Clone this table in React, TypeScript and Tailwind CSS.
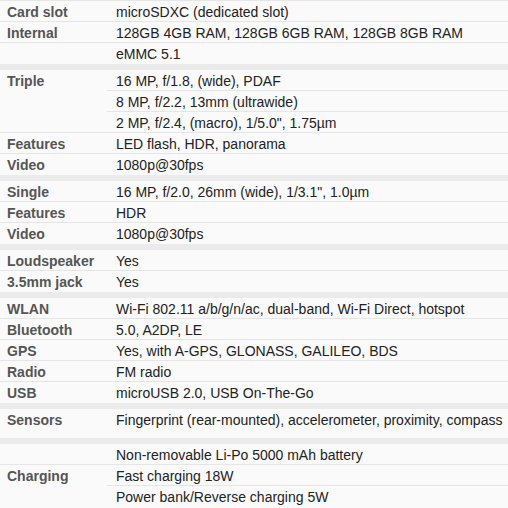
import React from "react";

type Row = { l?: string; v: string; lb?: boolean; tall?: boolean };

const groups: Row[][] = [
  [
    { l: "Card slot", v: "microSDXC (dedicated slot)" },
    { l: "Internal", v: "128GB 4GB RAM, 128GB 6GB RAM, 128GB 8GB RAM" },
    { l: "", v: "eMMC 5.1" },
  ],
  [
    { l: "Triple", v: "16 MP, f/1.8, (wide), PDAF", lb: false },
    { l: "", v: "8 MP, f/2.2, 13mm (ultrawide)", lb: false },
    { l: "", v: "2 MP, f/2.4, (macro), 1/5.0\", 1.75µm" },
    { l: "Features", v: "LED flash, HDR, panorama" },
    { l: "Video", v: "1080p@30fps" },
  ],
  [
    { l: "Single", v: "16 MP, f/2.0, 26mm (wide), 1/3.1\", 1.0µm" },
    { l: "Features", v: "HDR" },
    { l: "Video", v: "1080p@30fps" },
  ],
  [
    { l: "Loudspeaker", v: "Yes" },
    { l: "3.5mm jack", v: "Yes" },
  ],
  [
    { l: "WLAN", v: "Wi-Fi 802.11 a/b/g/n/ac, dual-band, Wi-Fi Direct, hotspot" },
    { l: "Bluetooth", v: "5.0, A2DP, LE" },
    { l: "GPS", v: "Yes, with A-GPS, GLONASS, GALILEO, BDS" },
    { l: "Radio", v: "FM radio" },
    { l: "USB", v: "microUSB 2.0, USB On-The-Go" },
  ],
  [{ l: "Sensors", v: "Fingerprint (rear-mounted), accelerometer, proximity, compass", tall: true }],
  [
    { l: "", v: "Non-removable Li-Po 5000 mAh battery" },
    { l: "Charging", v: "Fast charging 18W", lb: false },
    { l: "", v: "Power bank/Reverse charging 5W" },
  ],
];

export default function App() {
  return (
    <div
      className="w-[508px] h-[508px] bg-[#fafafa] overflow-hidden text-[14px] leading-[20px]"
      style={{ fontFamily: '"Liberation Sans", Arial, sans-serif' }}
    >
      <div className="border-t border-[#e6e6e6]">
        {groups.map((g, gi) => (
          <div key={gi}>
            {gi > 0 && <div className="h-[6px] bg-[#ebebeb]" />}
            {g.map((r, ri) => {
              const last = ri === g.length - 1;
              const labelBorder = !last && r.lb !== false;
              return (
                <div key={ri} className={`flex ${r.tall ? "h-[29px]" : "h-[21px]"}`}>
                  <div
                    className={`w-[107px] shrink-0 pl-[7px] pt-px font-bold text-[#555] whitespace-nowrap ${
                      labelBorder ? "border-b border-[#e6e6e6]" : ""
                    }`}
                  >
                    {r.l}
                  </div>
                  <div
                    className={`flex-1 pl-[9px] pt-px text-[#222] whitespace-nowrap ${
                      last ? "" : "border-b border-[#e6e6e6]"
                    }`}
                  >
                    {r.v}
                  </div>
                </div>
              );
            })}
          </div>
        ))}
      </div>
    </div>
  );
}
